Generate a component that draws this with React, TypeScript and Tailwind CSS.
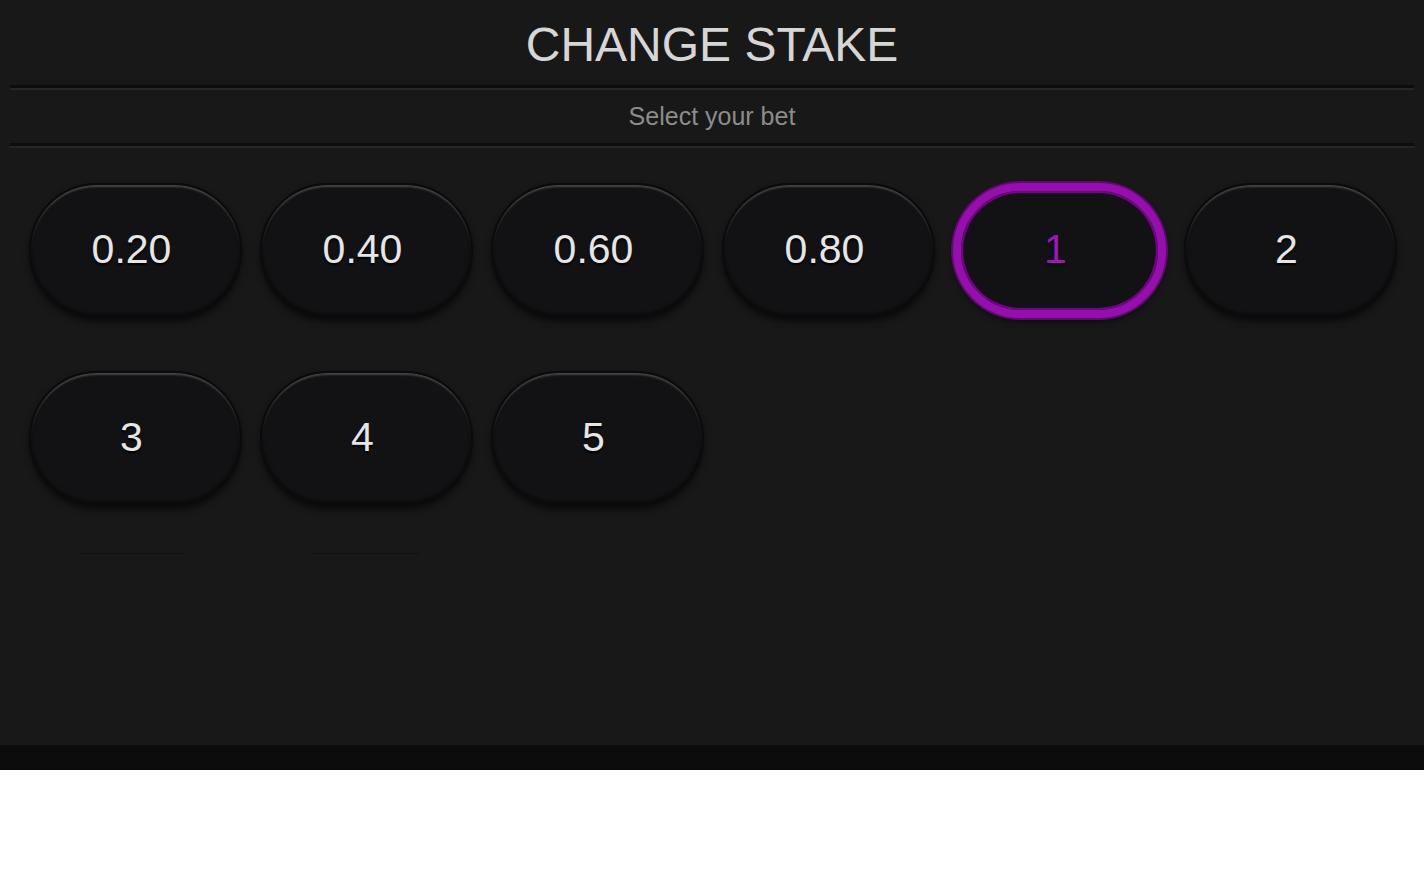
import React from 'react'

const rowOne = ['0.20', '0.40', '0.60', '0.80', '1', '2']
const rowTwo = ['3', '4', '5']

function StakeButton({ value, active }: { value: string; active?: boolean }) {
  if (active) {
    return (
      <button className="h-[135px] w-[213px] rounded-full bg-[#121214] border-[8px] border-[#960fae] shadow-[inset_0_0_0_2px_#6b0a7c,inset_0_0_0_3px_#2a0730,0_0_0_2px_#5e0a6d,0_4px_6px_rgba(0,0,0,0.55)] flex items-center justify-center">
        <span className="text-[41px] leading-none text-[#9e18b8] -mt-[3px] pr-2 [text-shadow:0_2px_2px_rgba(0,0,0,0.8)]">{value}</span>
      </button>
    )
  }
  return (
    <button className="h-[135px] w-[213px] rounded-full bg-[#121214] border-2 border-[#0b0b0c] shadow-[inset_0_3px_2px_-1px_rgba(150,150,150,0.4),inset_0_-2px_3px_rgba(0,0,0,0.5),0_4px_6px_rgba(0,0,0,0.55)] flex items-center justify-center">
      <span className="text-[41px] leading-none text-[#e6e6e6] -mt-[3px] pr-2 [text-shadow:0_2px_2px_rgba(0,0,0,0.9)]">{value}</span>
    </button>
  )
}

function Divider() {
  return (
    <div className="mx-[10px]">
      <div className="h-[3px] bg-[#0d0d0d]" />
      <div className="h-[2px] bg-[#262626]" />
    </div>
  )
}

export default function App() {
  return (
    <div className="w-full bg-white" style={{ fontFamily: '"Liberation Sans", Arial, sans-serif' }}>
      <div className="h-[745px] bg-[#181818] flex flex-col">
        {/* Header */}
        <div className="h-[85px] flex items-center justify-center">
          <h1 className="text-[48px] leading-none text-[#d6d6d6] mt-[4px]">CHANGE STAKE</h1>
        </div>
        <Divider />
        <div className="h-[53px] flex items-center justify-center">
          <p className="text-[25px] leading-none text-[#8c8c8c]">Select your bet</p>
        </div>
        <Divider />

        {/* Stake grid */}
        <div className="pl-[29px] pt-[35px] flex flex-col gap-[53px]">
          <div className="flex gap-[18px]">
            {rowOne.map((v) => (
              <StakeButton key={v} value={v} active={v === '1'} />
            ))}
          </div>
          <div className="flex gap-[18px]">
            {rowTwo.map((v) => (
              <StakeButton key={v} value={v} />
            ))}
          </div>
        </div>
        <div className="pl-[80px] mt-[47px] flex gap-[125px]">
          <div className="h-px w-[105px] bg-[#111111]" />
          <div className="h-px w-[110px] bg-[#111111]" />
        </div>
      </div>
      <div className="h-[25px] bg-[#0c0c0c]" />
      <div className="h-[126px] bg-white" />
    </div>
  )
}
